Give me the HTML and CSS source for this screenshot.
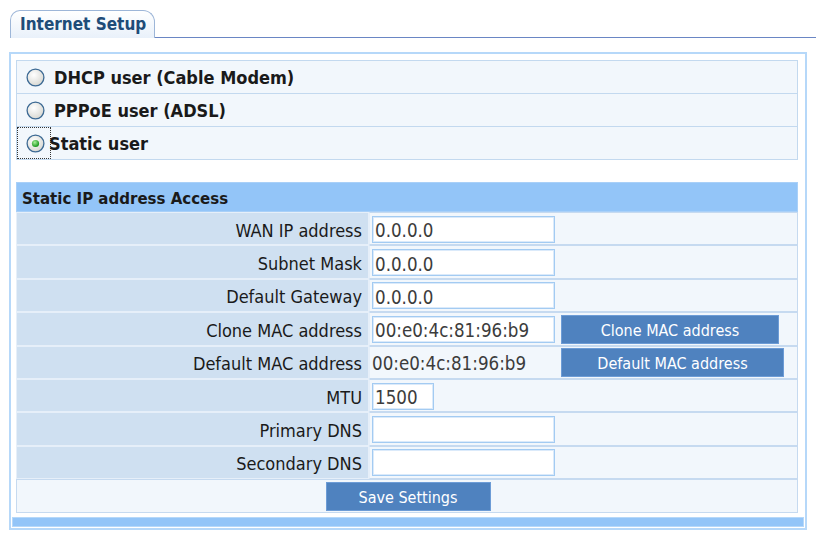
FILE: index.html
```html
<!DOCTYPE html>
<html>
<head>
<meta charset="utf-8">
<link rel="stylesheet" href="styles.css">
</head>
<body>
<div class="tabbar">
  <div class="tab">Internet Setup</div>
  <div class="tabfill"></div>
</div>
<div class="box">
  <div class="modes">
    <div class="mode"><span class="radio"><svg width="19" height="19" viewBox="0 0 19 19"><defs><radialGradient id="rg1" cx="0.4" cy="0.35" r="0.7"><stop offset="0" stop-color="#ffffff"/><stop offset="1" stop-color="#d6d6d0"/></radialGradient></defs><circle cx="9.5" cy="9.5" r="8.4" fill="url(#rg1)" stroke="#3d6a94" stroke-width="1.3"/></svg></span><span class="mtext">DHCP user (Cable Modem)</span></div>
    <div class="mode"><span class="radio"><svg width="19" height="19" viewBox="0 0 19 19"><circle cx="9.5" cy="9.5" r="8.4" fill="url(#rg1)" stroke="#3d6a94" stroke-width="1.3"/></svg></span><span class="mtext">PPPoE user (ADSL)</span></div>
    <div class="mode sel"><span class="focus"><span class="radio"><svg width="19" height="19" viewBox="0 0 19 19"><defs><radialGradient id="rg2" cx="0.4" cy="0.35" r="0.6"><stop offset="0" stop-color="#a8f098"/><stop offset="1" stop-color="#1f9a22"/></radialGradient></defs><circle cx="9.5" cy="9.5" r="8.4" fill="url(#rg1)" stroke="#3d6a94" stroke-width="1.3"/><circle cx="9.5" cy="9.5" r="3.6" fill="url(#rg2)"/></svg></span></span><span class="mtext tight">Static user</span></div>
  </div>
  <table class="static">
    <tr><th colspan="2">Static IP address Access</th></tr>
    <tr><td class="lbl">WAN IP address</td><td class="val"><input class="ip" value="0.0.0.0"></td></tr>
    <tr><td class="lbl">Subnet Mask</td><td class="val"><input class="ip" value="0.0.0.0"></td></tr>
    <tr><td class="lbl">Default Gateway</td><td class="val"><input class="ip" value="0.0.0.0"></td></tr>
    <tr><td class="lbl">Clone MAC address</td><td class="val"><div class="vrow"><input class="ip" value="00:e0:4c:81:96:b9"><button class="btn clone">Clone MAC address</button></div></td></tr>
    <tr><td class="lbl">Default MAC address</td><td class="val"><div class="vrow"><span class="plain">00:e0:4c:81:96:b9</span><button class="btn defmac">Default MAC address</button></div></td></tr>
    <tr><td class="lbl">MTU</td><td class="val"><input class="ip mtu" value="1500"></td></tr>
    <tr><td class="lbl">Primary DNS</td><td class="val"><input class="ip" value=""></td></tr>
    <tr><td class="lbl">Secondary DNS</td><td class="val"><input class="ip" value=""></td></tr>
    <tr><td class="save" colspan="2"><button class="btn savebtn">Save Settings</button></td></tr>
  </table>
  <div class="bottombar"></div>
</div>
</body>
</html>
```
FILE: styles.css
```css
html, body {
  margin: 0;
  padding: 0;
  background: #ffffff;
}
body {
  font-family: "DejaVu Sans Condensed", "DejaVu Sans", sans-serif;
  font-size: 18px;
  color: #1a1a1a;
}
.tabbar {
  display: flex;
  padding: 10px 0 0 10px;
  height: 38px;
  box-sizing: border-box;
}
.tab {
  width: 145px;
  height: 28px;
  box-sizing: border-box;
  border: 1px solid #9db6d8;
  border-bottom: none;
  border-radius: 10px 12px 0 0;
  background: linear-gradient(#ffffff, #e9f1fa);
  font-weight: bold;
  color: #204c78;
  padding: 3px 0 0 9px;
  font-size: 17px;
}
.tabfill {
  flex: 1;
  border-bottom: 1px solid #6a86c4;
}
.box {
  margin: 14px 0 0 9px;
  width: 798px;
  height: 478px;
  box-sizing: border-box;
  border: 2px solid #b6d8f9;
  padding: 6px 7px 0 5px;
}
.modes {
  border: 1px solid #c3d9ef;
  background: #f2f7fc;
}
.mode {
  display: flex;
  align-items: center;
  height: 33px;
  border-top: 1px solid #c3d9ef;
  box-sizing: border-box;
  padding-left: 9px;
}
.mode:first-child {
  border-top: none;
  height: 32px;
}
.mode.sel {
  padding-left: 0;
}
.radio {
  display: block;
  width: 19px;
  height: 19px;
}
.radio svg {
  display: block;
}
.mtext {
  font-weight: bold;
  margin-left: 9px;
}
.mtext.tight {
  margin-left: -2px;
}
.focus {
  display: flex;
  align-items: center;
  width: 34px;
  height: 32px;
  box-sizing: border-box;
  border: 1px dotted #333;
  padding-left: 8px;
}
table.static {
  margin-top: 22px;
  width: 782px;
  border-collapse: separate;
  border-spacing: 0;
}
th {
  background: #93c5f8;
  text-align: left;
  font-weight: bold;
  font-size: 16.7px;
  height: 30px;
  padding: 2px 0 0 5px;
  box-sizing: border-box;
  border: 1px solid #a9d0f8;
}
td {
  height: 33.4px;
  box-sizing: border-box;
  padding: 0;
}
td.lbl {
  width: 353px;
  background: #cfe0f1;
  text-align: right;
  padding: 3px 6px 0 0;
  border: 1px solid #e6eff9;
}
td.val {
  background: #f2f7fc;
  border: 1px solid #c6daf0;
  border-left: 1px solid #e6eff9;
  padding: 1px 0 0 2px;
}
td.save {
  background: #f2f7fc;
  border: 1px solid #c6daf0;
  text-align: center;
  padding: 1px 0 0 2px;
}
.vrow {
  display: flex;
  align-items: center;
}
input.ip {
  display: block;
  width: 183px;
  height: 27px;
  box-sizing: border-box;
  border: 1px solid #a3cbf2;
  box-shadow: inset 0 0 0 1px #dbeafa;
  font-family: "DejaVu Sans Condensed", "DejaVu Sans", sans-serif;
  font-size: 18.6px;
  color: #3c3c3c;
  padding: 3px 0 0 2px;
  margin: 0;
  background: #fff;
}
input.mtu {
  width: 62px;
}
.plain {
  display: block;
  width: 183px;
  font-size: 18.6px;
  padding-top: 2px;
  color: #3c3c3c;
}
.btn {
  font-family: "DejaVu Sans Condensed", "DejaVu Sans", sans-serif;
  font-size: 16px;
  color: #ffffff;
  background: #4f82bf;
  border: 1px solid #6d9cd6;
  height: 29px;
  margin: 0;
  padding: 2px 0 0 0;
  cursor: pointer;
}
.clone {
  width: 218px;
  margin-left: 6px;
}
.defmac {
  width: 223px;
  margin-left: 6px;
}
.savebtn {
  width: 165px;
}
.bottombar {
  margin: 4px -6px 0 -4px;
  height: 8px;
  background: #93c5f8;
  border: 1px solid #b6d8f9;
}
```
